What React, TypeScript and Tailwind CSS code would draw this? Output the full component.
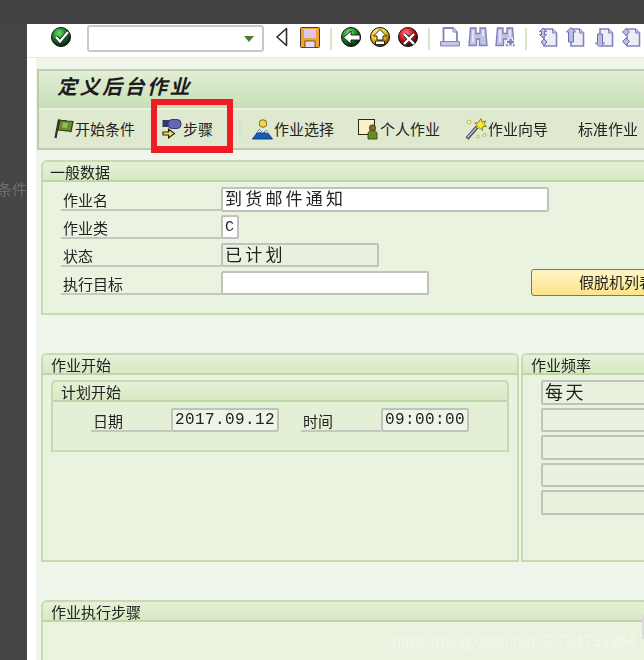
import type { ReactNode } from "react";

const cjk = { fontFamily: '"Noto Sans CJK SC", "Noto Sans", sans-serif' };
const mono = { fontFamily: '"Liberation Mono", "Noto Sans CJK SC", monospace' };

function Ball({ id, light, mid, dark, children }: { id: string; light: string; mid: string; dark: string; children: ReactNode }) {
  return (
    <svg width="20" height="20" viewBox="0 0 20 20" className="shrink-0">
      <defs>
        <radialGradient id={id} cx="0.4" cy="0.3" r="0.7">
          <stop offset="0" stopColor={light} />
          <stop offset="0.55" stopColor={mid} />
          <stop offset="1" stopColor={dark} />
        </radialGradient>
      </defs>
      <circle cx="10" cy="10" r="9.5" fill={`url(#${id})`} stroke="#111" strokeWidth="1" />
      {children}
    </svg>
  );
}

function CheckIcon() {
  return (
    <Ball id="chk" light="#6fe060" mid="#137a26" dark="#031c0a">
      <path d="M5 10l4 4.500L17 5" fill="none" stroke="#1c1c1c" strokeWidth="4" />
      <path d="M5 10l4 4.500L17 5" fill="none" stroke="#fff" strokeWidth="2.400" />
    </Ball>
  );
}

function BackIcon() {
  return (
    <Ball id="bck" light="#8fe56a" mid="#128a26" dark="#031f0a">
      <path d="M2.500 10.500L10 4v4h9v5h-9v4z" fill="#fff" stroke="#111" strokeWidth="0.900" />
    </Ball>
  );
}

function UpIcon() {
  return (
    <Ball id="upi" light="#fff6a8" mid="#f5c81c" dark="#6a3c00">
      <path d="M10 2.500l6.500 6.500h-3.500v4H7v-4H3.500zM5.500 14h9v3.500h-9z" fill="#fff" stroke="#111" strokeWidth="0.900" />
    </Ball>
  );
}

function CancelIcon() {
  return (
    <Ball id="cnl" light="#ff8484" mid="#d40f18" dark="#3c0004">
      <path d="M6 7l10 10M16 7L6 17" fill="none" stroke="#2c2c2c" strokeWidth="4" />
      <path d="M6 7l10 10M16 7L6 17" fill="none" stroke="#fff" strokeWidth="2.400" />
    </Ball>
  );
}

function PrevIcon() {
  return (
    <svg width="14" height="20" viewBox="0 0 14 20" className="shrink-0">
      <path d="M11.500 1.500L2 10l9.500 8.500z" fill="#fff" stroke="#2c2c2c" strokeWidth="1.600" strokeLinejoin="round" />
    </svg>
  );
}

function SaveIcon() {
  return (
    <svg width="20" height="21" viewBox="0 0 20 21" className="shrink-0">
      <rect x="0.500" y="0.500" width="19" height="20" rx="1" fill="#f0a52e" stroke="#4c3c2c" />
      <rect x="4" y="2" width="12" height="9" fill="#dcc6ee" />
      <rect x="5" y="14" width="10" height="6.500" fill="#ead9ee" stroke="#4c3c2c" strokeWidth="0.800" />
    </svg>
  );
}

function PrintIcon() {
  return (
    <svg width="20" height="20" viewBox="0 0 20 20" className="shrink-0">
      <path d="M3.500 1h9.500l4 4v10h-13.500z" fill="#fff" stroke="#8385ba" strokeWidth="1.800" />
      <path d="M13 1v4h4" fill="#d6d7ef" stroke="#8385ba" />
      <rect x="0.500" y="14.500" width="19" height="4.500" rx="1" fill="#c4c6e6" stroke="#8385ba" strokeWidth="1.200" />
    </svg>
  );
}

function FindIcon({ plus }: { plus?: boolean }) {
  return (
    <svg width="20" height="20" viewBox="0 0 20 20" className="shrink-0">
      <path d="M2.500 1h5.500v5.500h4V1h5.500l1.500 17.500h-7.500v-6.500H8.500v6.500H1z" fill="#c2c3e4" stroke="#7f81b8" strokeWidth="1.400" />
      <path d="M5 3v12M15 3v6" stroke="#f0f0fb" strokeWidth="1.500" />
      {plus && <path d="M15.500 10.500v9M11 15h9" stroke="#fff" strokeWidth="4.600" />}
      {plus && <path d="M15.500 11.500v7M12 15h7" stroke="#7f81b8" strokeWidth="2.400" />}
    </svg>
  );
}

function PageIcon({ arrow }: { arrow: string }) {
  return (
    <svg width="20" height="20" viewBox="0 0 20 20" className="shrink-0">
      <path d="M6 2h8.500l4 4v13H6z" fill="#eeeef9" stroke="#8385ba" strokeWidth="1.600" />
      <path d="M14.500 2v4h4" fill="#c2c3e4" stroke="#8385ba" />
      <path d={arrow} fill="#b9bbe0" stroke="#6c6ea8" strokeWidth="1" strokeLinejoin="round" />
    </svg>
  );
}

function FlagIcon() {
  return (
    <svg width="21" height="22" viewBox="0 0 21 22" className="shrink-0">
      <path d="M6 1.500L2.500 20" stroke="#34322a" strokeWidth="2.200" fill="none" />
      <path d="M7 2c3 1.500 5 0 7 1l6 .500-2 10c-3-1.500-5 0-7-1L5 12z" fill="#64902f" stroke="#2c3a1a" strokeWidth="1.200" />
      <path d="M10 4.500l5 .500-1 5-5-.500z" fill="#94bc58" />
    </svg>
  );
}

function StepIcon() {
  return (
    <svg width="20" height="20" viewBox="0 0 20 20" className="shrink-0">
      <rect x="0.500" y="1" width="7" height="7" fill="#35376a" />
      <rect x="6" y="0.500" width="13" height="9" rx="4" fill="#6468b8" stroke="#2c2e58" strokeWidth="0.900" />
      <path d="M1 13h5.500v-3l6 4.500-6 4.500v-3H1z" fill="#f7e62c" stroke="#1c1c1c" strokeWidth="1.100" />
    </svg>
  );
}

function MountainIcon() {
  return (
    <svg width="21" height="21" viewBox="0 0 21 21" className="shrink-0">
      <circle cx="11" cy="4.500" r="3.800" fill="#f8d548" stroke="#7c5c10" strokeWidth="0.900" />
      <path d="M0.500 20L7.500 10.500l3.500 4 3-3 6.500 8.500z" fill="#1a5bb0" stroke="#0f3470" strokeWidth="0.900" />
      <path d="M5 14l2.500-3.500L10.500 14l-3-1.200zM12.500 13l1.500-1.500 2.200 3z" fill="#fff" />
    </svg>
  );
}

function PersonIcon() {
  return (
    <svg width="21" height="21" viewBox="0 0 21 21" className="shrink-0">
      <rect x="0.500" y="0.500" width="16" height="15" fill="#fbf0c6" stroke="#2c2a20" />
      <circle cx="14.500" cy="9" r="3.200" fill="#8a6a1e" stroke="#332a10" strokeWidth="0.700" />
      <path d="M10 20v-5.500c0-2 2-3 4.500-3s4.500 1 4.500 3V20z" fill="#6a8a24" stroke="#36441a" strokeWidth="0.900" />
    </svg>
  );
}

function WandIcon() {
  return (
    <svg width="22" height="22" viewBox="0 0 22 22" className="shrink-0">
      <path d="M2 20.500L12 9" stroke="#44465e" strokeWidth="3.600" />
      <path d="M2.500 19.500L11.500 9.500" stroke="#c8cae0" strokeWidth="1.300" />
      <path d="M16 0.500l1 3.500 3.800-1-2 3.300 2.700 2-3.700.5-.5 3.700-2.700-2.700-3.200 1 1-3.700-2.700-2 3.700-.5z" fill="#f7ea2c" stroke="#5e5618" strokeWidth="0.700" />
      <circle cx="4" cy="4" r="2" fill="#f8f4a0" stroke="#a8a040" strokeWidth="0.700" />
      <circle cx="19.500" cy="17" r="1.700" fill="#f8f4a0" stroke="#a8a040" strokeWidth="0.700" />
      <circle cx="13" cy="18.500" r="1.400" fill="#f8f4a0" stroke="#a8a040" strokeWidth="0.700" />
    </svg>
  );
}

function Sep({ className }: { className: string }) {
  return <div className={`w-[2px] h-[22px] bg-[#d6e6c8] shrink-0 ${className}`} />;
}

function Field({ className, children, gray }: { className: string; children?: ReactNode; gray?: boolean }) {
  return (
    <div
      className={`shrink-0 border-2 border-[#c0c2bc] rounded-[2px] flex items-center pl-[2px] leading-none text-[#222] whitespace-nowrap ${gray ? "bg-[#e9f2de]" : "bg-white"} ${className}`}
    >
      {children}
    </div>
  );
}

function Label({ className, children }: { className: string; children: ReactNode }) {
  return (
    <div className={`shrink-0 h-full border-b-2 border-[#c4c6c0] flex items-end text-[15px] leading-[18px] text-[#222] ${className}`}>
      {children}
    </div>
  );
}

function GroupHead({ children, className }: { children: ReactNode; className: string }) {
  return (
    <div className={`h-[20px] shrink-0 border-b-2 border-[#bcd6a6] bg-gradient-to-b from-[#e6f1d8] to-[#d7e9c2] flex items-center text-[15px] leading-none text-[#222] rounded-t-[5px] ${className}`}>
      {children}
    </div>
  );
}

function ToolBtn({ icon, label, className }: { icon?: ReactNode; label: string; className: string }) {
  return (
    <div className={`flex items-center gap-[1px] shrink-0 ${className}`}>
      {icon}
      <span className="text-[15px] text-[#222] whitespace-nowrap">{label}</span>
    </div>
  );
}

export default function App() {
  return (
    <div className="relative w-[644px] h-[660px] overflow-hidden bg-[#454545] flex flex-col" style={cjk}>
      <div className="h-[24px] shrink-0 bg-[#424242]" />
      <div className="flex-1 flex min-h-0 blur-[0.35px]">
        <div className="w-[27px] shrink-0 overflow-hidden flex justify-end items-start pt-[154px] text-[15px] text-[#6e6e6e] whitespace-nowrap">
          条件
        </div>
        <div className="w-[617px] shrink-0 bg-white flex flex-col">
          {/* system toolbar */}
          <div className="h-[34px] shrink-0 border-b border-[#e6e8e2] flex items-start">
            <div className="ml-[24px] mt-[3px]"><CheckIcon /></div>
            <div className="ml-[16px] mt-[1px] w-[177px] h-[27px] shrink-0 border-2 border-[#c8cac4] rounded-[3px] bg-white flex items-center justify-end pr-[8px]">
              <div className="w-0 h-0 border-x-[5px] border-x-transparent border-t-[6px] border-t-[#4f7a35]" />
            </div>
            <div className="ml-[11px] mt-[3px]"><PrevIcon /></div>
            <div className="ml-[11px] mt-[3px]"><SaveIcon /></div>
            <Sep className="ml-[10px] mt-[4px]" />
            <div className="ml-[9px] mt-[3px]"><BackIcon /></div>
            <div className="ml-[9px] mt-[3px]"><UpIcon /></div>
            <div className="ml-[8px] mt-[3px]"><CancelIcon /></div>
            <Sep className="ml-[10px] mt-[4px]" />
            <div className="ml-[10px] mt-[3px]"><PrintIcon /></div>
            <div className="ml-[8px] mt-[3px]"><FindIcon /></div>
            <div className="ml-[7px] mt-[3px]"><FindIcon plus /></div>
            <Sep className="ml-[10px] mt-[4px]" />
            <div className="ml-[11px] mt-[3px]"><PageIcon arrow="M5 1l3.500 3.500H6.500v3H8.500L5 11 1.500 7.500h2v-3h-2zM6 12l3 3-3 3.500L3 15z" /></div>
            <div className="ml-[7px] mt-[3px]"><PageIcon arrow="M6 0.500l4.500 4.500H8.500v10h-5V5h-2z" /></div>
            <div className="ml-[9px] mt-[3px]"><PageIcon arrow="M3.500 7h5v9h2L6 20.500 1.500 16h2z" /></div>
            <div className="ml-[7px] mt-[3px]"><PageIcon arrow="M5 1.500l3.500 3.500L5 8.500 1.500 5zM5 11l3.500 3.500L5 18l-3.500-3.500z" /></div>
          </div>

          {/* screen body */}
          <div className="flex-1 ml-[9px] bg-[#eff5eb] pt-[11px] flex flex-col">
            <div className="ml-[1px] w-[620px] shrink-0 border-t-2 border-l-2 border-[#bcccae]">
              <div className="h-[37px] bg-gradient-to-b from-[#e2eed6] to-[#c8deb6] flex items-center pl-[18px] pb-[7px] text-[20px] leading-none font-bold italic tracking-[2.500px] text-[#1c1c1c]">
                定义后台作业
              </div>
              <div className="h-[42px] border-t-2 border-t-[#eaf2e2] border-b-2 border-b-[#bcccae] bg-[#dfe9d0] flex items-center">
                <ToolBtn className="ml-[14px]" icon={<FlagIcon />} label="开始条件" />
                <ToolBtn className="ml-[27px]" icon={<StepIcon />} label="步骤" />
                <Sep className="ml-[26px]" />
                <ToolBtn className="ml-[11px]" icon={<MountainIcon />} label="作业选择" />
                <ToolBtn className="ml-[24px]" icon={<PersonIcon />} label="个人作业" />
                <ToolBtn className="ml-[25px]" icon={<WandIcon />} label="作业向导" />
                <ToolBtn className="ml-[30px]" label="标准作业" />
              </div>
            </div>

            {/* general data */}
            <div className="ml-[5px] mt-[10px] w-[620px] h-[155px] shrink-0 border-2 border-[#c4dcb0] rounded-t-[6px] bg-[#e9f3df] flex flex-col">
              <GroupHead className="pl-[7px]">一般数据</GroupHead>
              <div className="flex flex-col gap-[4px] pt-[5px] pl-[18px]">
                <div className="h-[24px] flex">
                  <Label className="w-[160px] pl-[2px]">作业名</Label>
                  <Field className="w-[328px] h-[25px] pb-[4px] text-[17px] tracking-[3.200px]">到货邮件通知</Field>
                </div>
                <div className="h-[24px] flex">
                  <Label className="w-[160px] pl-[2px]">作业类</Label>
                  <Field className="w-[18px] h-[24px] text-[15px]"><span style={mono}>C</span></Field>
                </div>
                <div className="h-[24px] flex">
                  <Label className="w-[160px] pl-[2px]">状态</Label>
                  <Field gray className="w-[158px] h-[24px] pb-[4px] text-[17px] tracking-[3.200px]">已计划</Field>
                </div>
                <div className="h-[24px] flex">
                  <Label className="w-[160px] pl-[2px]">执行目标</Label>
                  <Field className="w-[208px] h-[24px]" />
                  <div className="ml-[102px] -mt-[2px] w-[130px] h-[27px] shrink-0 border border-[#77786a] rounded-[3px] bg-gradient-to-b from-[#fff5c4] to-[#fde48a] flex items-center pl-[47px] text-[15px] text-[#222] whitespace-nowrap">
                    假脱机列表
                  </div>
                </div>
              </div>
            </div>

            {/* job start + frequency */}
            <div className="ml-[5px] mt-[38px] h-[209px] shrink-0 flex gap-[2px]">
              <div className="w-[478px] shrink-0 border-2 border-[#c4dcb0] rounded-t-[6px] bg-[#e9f3df] flex flex-col">
                <GroupHead className="pl-[8px]">作业开始</GroupHead>
                <div className="ml-[8px] mt-[5px] w-[458px] h-[72px] shrink-0 border-2 border-[#c4dcb0] rounded-t-[5px] bg-[#e3f0d5] flex flex-col">
                  <GroupHead className="pl-[8px]">计划开始</GroupHead>
                  <div className="h-[24px] mt-[6px] flex pl-[38px]">
                    <Label className="w-[80px] pl-[2px]">日期</Label>
                    <Field gray className="w-[108px] h-[24px] text-[16px] tracking-[0.400px] bg-[#eef5e6]"><span style={mono}>2017.09.12</span></Field>
                    <Label className="ml-[22px] w-[80px] pl-[2px]">时间</Label>
                    <Field gray className="w-[88px] h-[24px] text-[16px] tracking-[0.400px] bg-[#eef5e6]"><span style={mono}>09:00:00</span></Field>
                  </div>
                </div>
              </div>
              <div className="w-[200px] shrink-0 border-2 border-[#c4dcb0] rounded-t-[6px] bg-[#e9f3df] flex flex-col">
                <GroupHead className="pl-[8px]">作业频率</GroupHead>
                <div className="flex flex-col gap-[3px] pt-[5px] pl-[18px]">
                  <Field gray className="w-[170px] h-[24.500px] pb-[2px] text-[18px] tracking-[2.500px]">每天</Field>
                  <Field gray className="w-[170px] h-[24.500px]" />
                  <Field gray className="w-[170px] h-[24.500px]" />
                  <Field gray className="w-[170px] h-[24.500px]" />
                  <Field gray className="w-[170px] h-[24.500px]" />
                </div>
              </div>
            </div>

            {/* job steps */}
            <div className="ml-[5px] mt-[38px] w-[620px] flex-1 border-2 border-b-0 border-[#c4dcb0] rounded-t-[6px] bg-[#e9f3df] flex flex-col">
              <GroupHead className="pl-[8px]">作业执行步骤</GroupHead>
            </div>
          </div>
        </div>
      </div>

      {/* red highlight from the annotation */}
      <div className="absolute left-[151px] top-[99px] w-[82px] h-[54px] border-x-[6px] border-t-[6px] border-b-[7px] border-[#ee1c25]" />
      <div className="absolute left-[642px] top-[615px] w-[6px] h-[24px] border-2 border-[#d8dcd4] bg-[#f4f8f0] rounded-[2px]" />
      <div className="absolute left-[392px] top-[630px] text-[16px] text-white/40 whitespace-nowrap" style={{ fontFamily: '"Liberation Sans", sans-serif' }}>
        https://blog.csdn.net/J2724731264
      </div>
    </div>
  );
}
